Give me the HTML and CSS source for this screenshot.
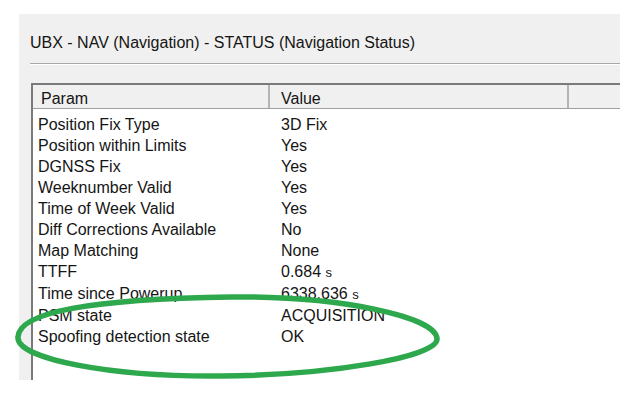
FILE: index.html
```html
<!DOCTYPE html>
<html lang="en">
<head>
    <meta charset="UTF-8">
    <title>UBX - NAV - STATUS</title>
    <link rel="stylesheet" href="styles.css">
</head>
<body>
    <div class="panel">
        <h1 class="title">UBX - NAV (Navigation) - STATUS (Navigation Status)</h1>
        <div class="separator"></div>
        <div class="listbox">
            <div class="header">
                <div class="col col-param">Param</div>
                <div class="col col-value">Value</div>
                <div class="col col-rest"></div>
            </div>
            <div class="rows">
                <div class="row"><span class="param">Position Fix Type</span><span class="value">3D Fix</span></div>
                <div class="row"><span class="param">Position within Limits</span><span class="value">Yes</span></div>
                <div class="row"><span class="param">DGNSS Fix</span><span class="value">Yes</span></div>
                <div class="row"><span class="param">Weeknumber Valid</span><span class="value">Yes</span></div>
                <div class="row"><span class="param">Time of Week Valid</span><span class="value">Yes</span></div>
                <div class="row"><span class="param">Diff Corrections Available</span><span class="value">No</span></div>
                <div class="row"><span class="param">Map Matching</span><span class="value">None</span></div>
                <div class="row"><span class="param">TTFF</span><span class="value">0.684 <small>s</small></span></div>
                <div class="row"><span class="param">Time since Powerup</span><span class="value">6338.636 <small>s</small></span></div>
                <div class="row"><span class="param">PSM state</span><span class="value">ACQUISITION</span></div>
                <div class="row"><span class="param">Spoofing detection state</span><span class="value">OK</span></div>
            </div>
        </div>
        <!-- hand drawn highlight round the last row -->
        <svg class="highlight" width="440" height="100" viewBox="0 0 440 100">
            <path d="M7 50 C8 25 80 12 220 10 C330 9 426 30 426 52 C426 70 320 88 210 89 C100 90 5 72 7 50 Z" fill="none" stroke="#2ea84c" stroke-width="5.5" stroke-linejoin="round"/>
        </svg>
    </div>
</body>
</html>
```

FILE: styles.css
```css
* { margin: 0; padding: 0; box-sizing: border-box; }

body {
    background: #fff;
    font-family: "Liberation Sans", Arial, sans-serif;
    color: #151515;
}

.panel {
    position: relative;
    margin: 14px 10px 0 19px;
    width: 601px;
    height: 366px;
    background: #f0f0f0;
    display: flex;
    flex-direction: column;
}

.title {
    font-size: 16px;
    font-weight: normal;
    padding: 19px 0 0 11px;
    line-height: 20px;
}

.separator {
    margin: 10px 0 0 11px;
    height: 2px;
    border-top: 1px solid #a8a8a8;
    border-bottom: 1px solid #fff;
}

.listbox {
    margin: 18px 0 0 12px;
    flex: 1;
    background: #fff;
    border-top: 2px solid #7a7a7a;
    border-left: 2px solid #7a7a7a;
}

.header {
    display: flex;
    height: 24px;
    background: #f0f0f0;
    border-bottom: 1px solid #a0a0a0;
    font-size: 16px;
    line-height: 23px;
    padding-top: 2px;
}

.col { padding-left: 8px; }
.col-param { width: 237px; border-right: 2px solid #b4b4b4; margin-top: -2px; padding-top: 2px; }
.col-value { width: 299px; border-right: 2px solid #b4b4b4; padding-left: 11px; margin-top: -2px; padding-top: 2px; }
.col-rest { flex: 1; }

.rows {
    padding-top: 5px;
    font-size: 16px;
    line-height: 21px;
}

.row { display: flex; }
.param { width: 248px; padding-left: 5px; }
.value { flex: 1; }
.value small { font-size: 13px; }

.highlight {
    position: absolute;
    left: -8px;
    top: 273px;
}
```
